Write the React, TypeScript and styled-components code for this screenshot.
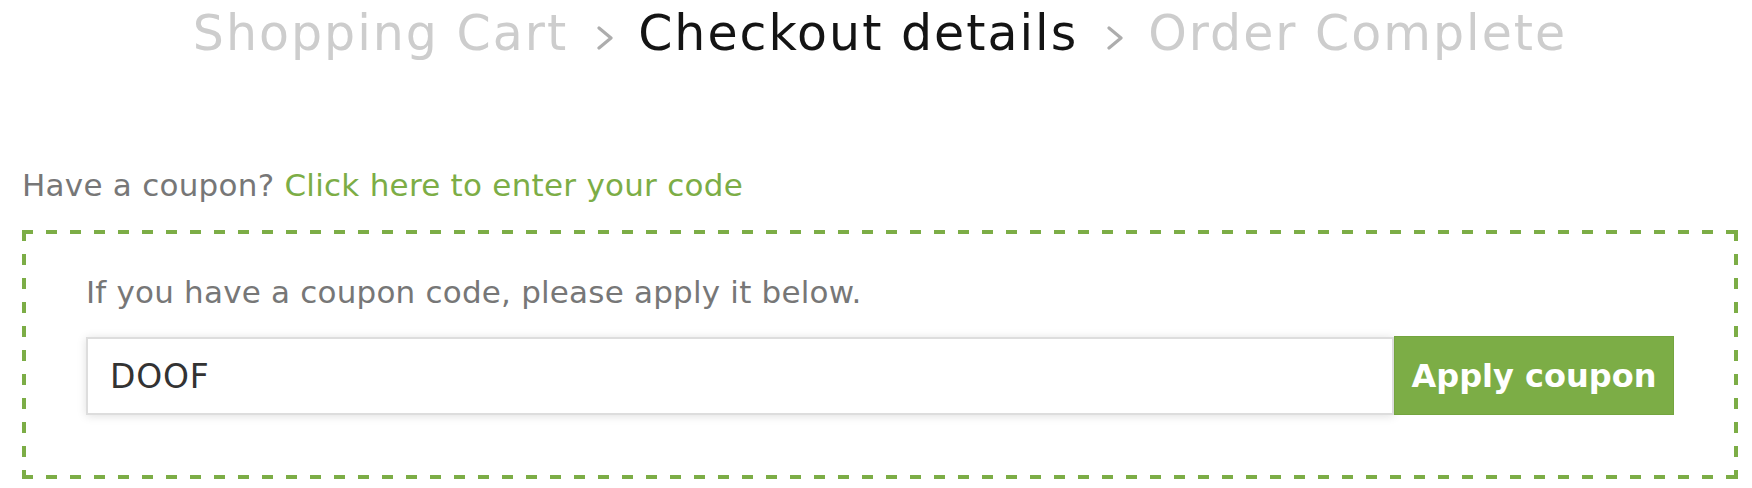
import React from "react";
import styled, { createGlobalStyle } from "styled-components";

const colors = {
    green: "#7cad46",
    greenDark: "#74a53f",
    muted: "#777777",
    stepIdle: "#cdcdcd",
    stepActive: "#141414",
    chevron: "#adadad",
    inputText: "#333333",
    inputBorder: "#dddddd",
};

const GlobalStyle = createGlobalStyle`
    html, body {
        margin: 0;
        padding: 0;
        background: #ffffff;
    }

    body {
        font-family: "DejaVu Sans", "Liberation Sans", sans-serif;
        -webkit-font-smoothing: antialiased;
    }
`;

const steps = [
    { label: "Shopping Cart", active: false },
    { label: "Checkout details", active: true },
    { label: "Order Complete", active: false },
];

const Chevron: React.FC = () => (
    <svg width="18" height="24" viewBox="0 0 18 24" aria-hidden="true">
        <path d="M3 2 L15 12 L3 22" fill="none" stroke={colors.chevron} strokeWidth="3.2" strokeLinecap="round" strokeLinejoin="round" />
    </svg>
);

const App: React.FC = () => {
    return (
        <Page>
            <GlobalStyle />
            <Steps>
                {steps.map((step, i) => (
                    <React.Fragment key={step.label}>
                        {i > 0 && <Separator><Chevron /></Separator>}
                        <Step $active={step.active}>{step.label}</Step>
                    </React.Fragment>
                ))}
            </Steps>

            <CouponNotice>
                Have a coupon? <CouponLink href="#coupon">Click here to enter your code</CouponLink>
            </CouponNotice>

            <CouponBox id="coupon">
                <Hint>If you have a coupon code, please apply it below.</Hint>
                <CouponForm onSubmit={e => e.preventDefault()}>
                    <CodeInput type="text" defaultValue="DOOF" aria-label="Coupon code" />
                    <ApplyButton type="submit">Apply coupon</ApplyButton>
                </CouponForm>
            </CouponBox>
        </Page>
    );
};

export default App;


// dashes drawn with gradients: 4px thick, 11px dash, 24px period
const dashH = `repeating-linear-gradient(90deg, ${ colors.green } 0 11px, transparent 11px 24px)`;
const dashV = `repeating-linear-gradient(180deg, ${ colors.green } 0 11px, transparent 11px 24px)`;

const Page = styled.div`
    padding: 5px 14px 0 22px;
`;

const Steps = styled.nav`
    display: flex;
    justify-content: center;
    align-items: baseline;
    font-size: 49px;
    line-height: 58px;
    letter-spacing: 2px;
`;

const Step = styled.span<{ $active?: boolean }>`
    color: ${ props => props.$active ? colors.stepActive : colors.stepIdle };
    white-space: nowrap;
`;

const Separator = styled.span`
    display: inline-flex;
    margin: 0 24px 0 28px;

    & svg {
        display: block;
        margin-bottom: -1px;
    }
`;

const CouponNotice = styled.p`
    margin: 99px 0 0;
    font-size: 31px;
    line-height: 46px;
    letter-spacing: 0.25px;
    color: ${ colors.muted };
`;

const CouponLink = styled.a`
    color: ${ colors.green };
    text-decoration: none;
`;

const CouponBox = styled.div`
    margin-top: 22px;
    padding: 39px 64px 64px;
    background:
        ${ dashH } left top / 100% 4px no-repeat,
        ${ dashH } left bottom / 100% 4px no-repeat,
        ${ dashV } left top / 4px 100% no-repeat,
        ${ dashV } right top / 4px 100% no-repeat;
`;

const Hint = styled.p`
    margin: 0 0 22px;
    font-size: 31px;
    line-height: 46px;
    letter-spacing: 0.2px;
    color: ${ colors.muted };
`;

const CouponForm = styled.form`
    display: flex;
    align-items: stretch;
`;

const CodeInput = styled.input`
    flex: 1;
    min-width: 0;
    height: 78px;
    box-sizing: border-box;
    margin: 0;
    padding: 0 22px;
    border: 2px solid ${ colors.inputBorder };
    border-radius: 0;
    box-shadow: 0 1px 9px rgba(0, 0, 0, 0.13);
    font-family: "DejaVu Sans", "Liberation Sans", sans-serif;
    font-size: 33px;
    letter-spacing: 0.8px;
    color: ${ colors.inputText };
    background: #ffffff;
    outline: none;
`;

const ApplyButton = styled.button`
    width: 280px;
    height: 79px;
    margin: -1px 0 0;
    padding: 0;
    box-sizing: border-box;
    border: 1px solid ${ colors.greenDark };
    border-radius: 0;
    background: ${ colors.green };
    color: #ffffff;
    font-family: "DejaVu Sans", "Liberation Sans", sans-serif;
    font-weight: 700;
    font-size: 32px;
    cursor: pointer;
`;
